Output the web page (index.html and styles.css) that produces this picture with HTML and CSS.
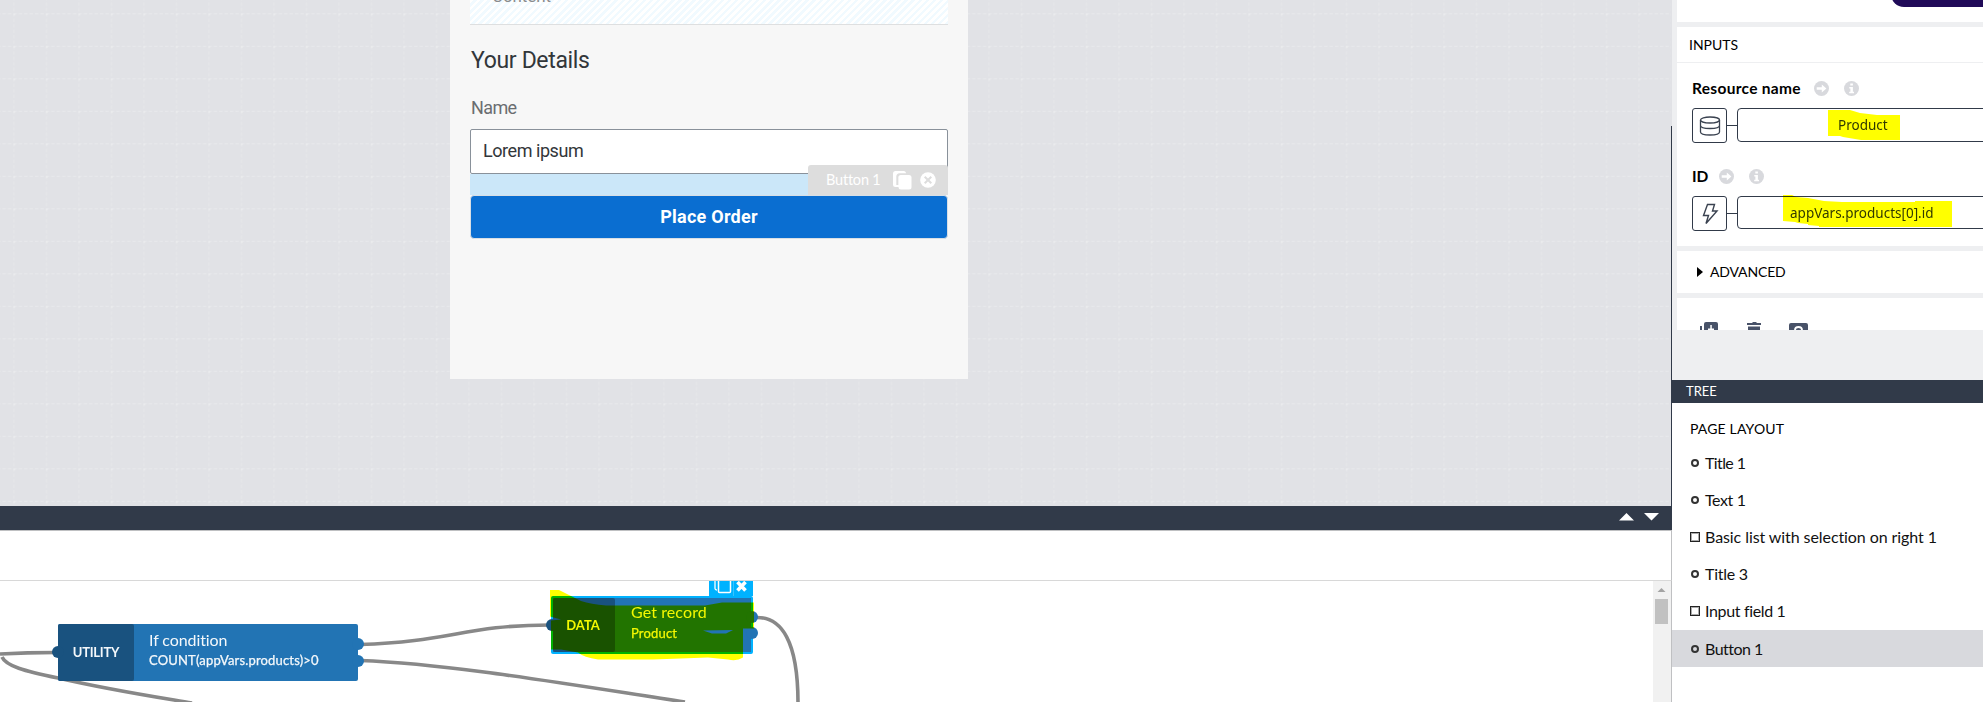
FILE: index.html
```html
<!DOCTYPE html>
<html lang="en">
<head>
<meta charset="utf-8">
<title>Composer</title>
<link rel="stylesheet" href="styles.css">
</head>
<body>
<div class="app">
  <main class="workspace">
    <section class="stage">
      <svg class="grid" width="1671" height="506">
        <defs><pattern id="grid" x="13.300" y="13.300" width="32.500" height="32.500" patternUnits="userSpaceOnUse">
          <path d="M0 .5h32.500" stroke="#e8e9ec" stroke-width="1.100" stroke-dasharray="3.400 2.017"/>
          <path d="M.5 0v32.500" stroke="#e5e6e9" stroke-width="1.100" stroke-dasharray="3.400 2.017"/>
          <path d="M0 0h2v2H0z" fill="#eaebed"/>
        </pattern></defs>
        <rect width="1671" height="506" fill="url(#grid)"/>
      </svg>
      <div class="phone">
        <div class="list-slot"><span>Content</span></div>
        <h1 class="title"><span>Your Details</span></h1>
        <label class="label"><span>Name</span></label>
        <div class="input"><span>Lorem ipsum</span></div>
        <div class="drop-gap">
          <div class="tag">
            <span class="tag-name">Button 1</span>
            <svg class="tag-copy" width="19" height="19" viewBox="0 0 19 19"><rect x="0" y="0" width="13" height="16" rx="2.5" fill="#fff"/><path d="M4.500 14V5.500q0-2 2-2H13" fill="none" stroke="#ddd" stroke-width="2.400"/><rect x="5.500" y="4" width="13" height="14.500" rx="2.500" fill="#fff"/></svg>
            <svg class="tag-close" width="16" height="16" viewBox="0 0 16 16"><circle cx="8" cy="8" r="7.800" fill="#fff"/><path d="M4.700 4.700l6.600 6.600M11.300 4.700l-6.600 6.600" stroke="#ddd" stroke-width="2"/></svg>
          </div>
        </div>
        <div class="button"><span>Place Order</span></div>
      </div>
      <div class="stage-edge"></div>
    </section>
    <div class="splitter">
      <svg width="42" height="10" viewBox="0 0 42 10"><path d="M0 8.500L7.500 1L15 8.500zM25 1h15L32.500 8.500z" fill="#fff"/></svg>
    </div>
    <div class="logic-head"></div>
    <section class="logic">
      <div class="flow">
        <svg class="wires" width="1653" height="121" viewBox="0 581 1653 121" fill="none" stroke="#888" stroke-width="3.600">
          <path d="M0 654C18 653 32 652.500 56 652.500"/>
          <path d="M2 657C6 666 24 671 58 678C110 690 150 696 192 703"/>
          <path d="M360 644.500C450 642 465 625 550 625"/>
          <path d="M360 660.500C450 664 560 683 685 702"/>
          <path d="M755 617.500C782 616 798 642 798 703"/>
        </svg>
        <div class="node node-if">
          <div class="kind"><span class="t-utility">UTILITY</span></div>
          <div class="info"><span class="t-if">If condition</span><span class="t-count">COUNT(appVars.products)&gt;0</span></div>
          <i class="port port-in"></i><i class="port port-a"></i><i class="port port-b"></i>
        </div>
        <div class="node-tools">
          <svg width="44" height="15" viewBox="0 0 44 15" fill="none" stroke="#fff"><path d="M6 0v7.500q0 1.500 2 1.500" stroke-width="1.300"/><rect x="9.500" y="-4" width="12" height="15.500" rx="1" stroke-width="1.500"/><path d="M24.500 0v15" stroke="#38c3ff"/><path d="M28.500 1l8 8.500M36.500 1l-8 8.500" stroke-width="3.600"/></svg>
        </div>
        <div class="node node-get">
          <div class="kind"><span class="t-data">DATA</span></div>
          <div class="info"><span class="t-get">Get record</span><span class="t-prod">Product</span></div>
          <i class="port port-in"></i><i class="port port-a"></i><i class="port port-b"></i>
        </div>
        <svg class="marker" width="220" height="80" viewBox="540 585 220 80"><path fill="#ff0" fill-rule="evenodd" d="M550 590h9l22 11q10 3 25 4.500H705l17-3h32v26h-11v29q-6 4-15 2l-20-2-55 2h-55q-14-2-20-7l-17-3H551v-29l10-1-11-3zM703 630.500l30-.5-7 3.500h-14z"/></svg>
      </div>
      <div class="scrollbar"><svg width="17" height="18" viewBox="0 0 17 18"><path d="M4.500 11l4-4 4 4z" fill="#a3a3a3"/></svg><div class="thumb"></div></div>
    </section>
  </main>
  <aside class="side">
    <section class="props">
      <div class="card card-top"><div class="pill"></div></div>
      <div class="card card-inputs">
        <header class="card-head"><span class="t-inputs">INPUTS</span></header>
        <div class="field">
          <div class="field-label"><span class="t-resource">Resource name</span>
            <svg width="15" height="15" viewBox="0 0 15 15"><circle cx="7.500" cy="7.500" r="7.500" fill="#d8d9dd"/><path d="M2.700 6.200h5.100V3.500l4.600 4-4.600 4V8.800H2.700z" fill="#fff"/></svg>
            <svg width="15" height="15" viewBox="0 0 15 15"><circle cx="7.500" cy="7.500" r="7.500" fill="#d8d9dd"/><path d="M6.300 2.400h2.600v2.200H6.300zM5.300 6h3.600v4.700H10v1.500H5.200v-1.500h1.200V7.400H5.300z" fill="#fff"/></svg>
          </div>
          <div class="binding"><div class="bind-icon"><svg width="22" height="20" viewBox="0 0 22 20" fill="none" stroke="#3a4250" stroke-width="1.300"><ellipse cx="11" cy="4" rx="9.500" ry="3"/><path d="M1.500 4v12c0 4 19 4 19 0V4M1.500 9.500c0 4 19 4 19 0"/></svg></div><i class="link"></i>
            <div class="value value-a"><span class="t-product">Product</span>
              <svg class="mark-a" width="72" height="30" viewBox="0 0 72 30"><path d="M0 0h22l10 3 17 2h23v25H33l-18-3-3-1H0z" fill="#ff0"/></svg></div></div>
        </div>
        <div class="field field-id">
          <div class="field-label"><span class="t-id">ID</span>
            <svg width="15" height="15" viewBox="0 0 15 15"><circle cx="7.500" cy="7.500" r="7.500" fill="#d8d9dd"/><path d="M2.700 6.200h5.100V3.500l4.600 4-4.600 4V8.800H2.700z" fill="#fff"/></svg>
            <svg width="15" height="15" viewBox="0 0 15 15"><circle cx="7.500" cy="7.500" r="7.500" fill="#d8d9dd"/><path d="M6.300 2.400h2.600v2.200H6.300zM5.300 6h3.600v4.700H10v1.500H5.200v-1.500h1.200V7.400H5.300z" fill="#fff"/></svg>
          </div>
          <div class="binding"><div class="bind-icon"><svg width="18" height="24" viewBox="0 0 18 24" fill="none" stroke="#3a4250" stroke-width="1.400"><path d="M6.500 2.500h7L11.500 9H16L5 21.500 7.500 13.500H2.500z"/></svg></div><i class="link"></i>
            <div class="value value-b"><span class="t-appvars">appVars.products[0].id</span>
              <svg class="mark-b" width="169" height="32" viewBox="0 0 169 32"><path d="M0 0h9l4 2 12 1 16 3 18 1h73V6h37v26H36v-1l-11-1v-1l-10-1-3-1-12-1z" fill="#ff0"/></svg></div></div>
        </div>
      </div>
      <div class="card card-adv"><svg width="6" height="10" viewBox="0 0 6 10"><path d="M0 0l6 5-6 5z"/></svg><span class="t-adv">ADVANCED</span></div>
      <div class="card card-actions">
        <svg width="110" height="8" viewBox="0 0 110 8" fill="#485268"><path d="M0 4h2v4H0zM4 2q0-2 2-2h10q2 0 2 2v6H4zM47 1h5l1-1h3l1 1h4v2H47zM48 4.500h12V8H48zM89 3q0-2 2-2h15q2 0 2 2v5H89z"/><path d="M10.300 3h1.500v5h-1.500zM8 6.500h6V8H8z" fill="#fff"/><path d="M95 8q0-3 3.500-3t3.500 3" fill="none" stroke="#fff" stroke-width="1.800"/></svg>
      </div>
    </section>
    <header class="tree-head"><span class="t-tree">TREE</span></header>
    <section class="tree">
      <h2 class="tree-title"><span class="t-page">PAGE LAYOUT</span></h2>
      <ul class="tree-list">
        <li><i class="dot"></i><span class="r1">Title 1</span></li>
        <li><i class="dot"></i><span class="r2">Text 1</span></li>
        <li><i class="box"></i><span class="r3">Basic list with selection on right 1</span></li>
        <li><i class="dot"></i><span class="r4">Title 3</span></li>
        <li><i class="box"></i><span class="r5">Input field 1</span></li>
        <li class="selected"><i class="dot"></i><span class="r6">Button 1</span></li>
      </ul>
    </section>
  </aside>
</div>
</body>
</html>
```
FILE: styles.css
```css
* { box-sizing: border-box; }
body { margin: 0; font-family: Lato, "Open Sans", sans-serif; color: #000; font-variant-ligatures: none; }
svg { display: block; flex: none; }
span { white-space: nowrap; }
.app { display: flex; width: 1983px; height: 702px; overflow: hidden; background: #fff; }
.workspace { width: 1672px; flex: none; display: flex; flex-direction: column; }

/* canvas */
.stage { position: relative; height: 506px; padding-left: 450px; background: #e1e2e6; }
.grid { position: absolute; left: 0; top: 0; }
.stage-edge { position: absolute; right: 0; top: 126px; width: 1px; height: 380px; background: #313a49; }
.phone { position: relative; width: 518px; height: 379px; padding: 0 20px; background: #f7f7f7; font-family: Roboto, sans-serif; }
.list-slot {
  height: 25px; border-bottom: 1px solid #dedfe0; padding-left: 22px; overflow: hidden;
  background: repeating-linear-gradient(135deg, #fff 0 2.500px, #f1faff 2.500px 5px);
  color: #8a8c8e; font-size: 17px; line-height: 20px;
}
.list-slot span { display: block; margin-top: -14px; letter-spacing: -.1px; }
.title { margin: 0; height: 70px; padding-left: 1px; font-size: 23px; font-weight: 400; line-height: 71px; letter-spacing: -.35px; color: #32363a; }
.label { display: block; height: 34px; padding-left: 1px; font-size: 18px; line-height: 26px; letter-spacing: -.6px; color: #6a6d70; }
.input { height: 45px; border: 1px solid #89919a; border-radius: 2px; background: #fff; padding-left: 12px; font-size: 18px; line-height: 42px; letter-spacing: -.45px; color: #32363a; }
.drop-gap { position: relative; height: 21px; background: #cbe7f9; }
.tag { position: absolute; right: 0; bottom: 0; width: 140px; height: 30px; display: flex; align-items: center; padding-left: 18px; background: #ddd; border-radius: 3px 3px 0 0; color: #fff; font: 14.500px Lato, sans-serif; letter-spacing: -.2px; }
.tag-name { width: 67px; margin-top: -2px; }
.tag-close { margin-left: 8px; }
.button { height: 44px; border: 1px solid #d9dfe5; border-radius: 4px; background: #0a6ed1; color: #fff; font-size: 18px; font-weight: 700; line-height: 41px; letter-spacing: .25px; text-align: center; }

/* logic panel */
.splitter { height: 24px; background: #313a49; display: flex; justify-content: flex-end; align-items: center; padding: 0 11px 2px 0; }
.logic-head { height: 51px; border: 1px solid #bfc0c2; border-width: 1px 1px 1px 0; border-bottom-color: #d8d8d8; }
.logic { height: 121px; display: flex; border-right: 1px solid #bfc0c2; }
.flow { position: relative; width: 1653px; overflow: hidden; isolation: isolate; background: #fff; }
.wires { position: absolute; left: 0; top: 0; }
.node { position: absolute; display: flex; height: 57px; background: #2274b4; color: #f4f8fb; border-radius: 2px; }
.node-if { left: 58px; top: 43px; width: 300px; }
.node-get { left: 551px; top: 15px; width: 202px; height: 58px; border: 2px solid #00b2ff; }
.kind { display: flex; align-items: center; justify-content: center; width: 76px; padding-bottom: 2px; background: #19527f; border-radius: 2px; font-size: 13px; font-weight: 700; }
.t-utility { letter-spacing: -.25px; }
.node-get .kind { width: 62px; padding: 0 2px 0 0; }
.info { display: flex; flex-direction: column; padding: 6px 0 0 15px; }
.node-get .info { padding: 4px 0 0 16px; }
.t-if, .t-get { font-size: 16px; line-height: 20px; letter-spacing: -.1px; }
.t-get { letter-spacing: .1px; }
.t-count, .t-prod { font-size: 13px; line-height: 20px; -webkit-text-stroke: .25px; letter-spacing: .17px; }
.t-prod { line-height: 22px; }
.port { position: absolute; width: 12px; height: 12px; border-radius: 50%; background: #2274b4; }
.port-in { left: -6px; top: 22px; background: #19527f; }
.port-a { right: -6px; top: 14px; }
.port-b { right: -6px; top: 31px; }
.node-get .port-in { left: -7px; top: 21px; }
.node-get .port-a { right: -7px; top: 13px; }
.node-get .port-b { right: -7px; top: 29px; }
.node-tools { position: absolute; left: 709px; top: 0; background: #00b2ff; }
.marker { position: absolute; left: 540px; top: 4px; mix-blend-mode: multiply; }
.scrollbar { width: 18px; background: #f1f1f1; }
.thumb { width: 13px; height: 25px; margin-left: 2px; background: #c1c1c1; }

/* side panel */
.side { width: 311px; flex: none; overflow: hidden; display: flex; flex-direction: column; }
.props { height: 380px; flex: none; padding-left: 5px; background: #eeeff1; display: flex; flex-direction: column; gap: 5px; }
.card { flex: none; overflow: hidden; background: #fff; }
.card-top { height: 22px; padding-left: 214px; }
.pill { width: 120px; height: 30px; margin-top: -23px; border-radius: 13px; background: #200a58; }
.card-inputs { height: 219px; }
.card-head { height: 36px; border-bottom: 1px solid #eeeff1; padding-left: 12px; font-size: 14px; line-height: 35px; }
.field { height: 87px; padding: 17px 0 0 15px; }
.field-id { padding-top: 18px; }
.field-label { height: 17px; display: flex; align-items: center; gap: 15px; font-size: 15.500px; font-weight: 700; }
.field-label span { margin: -2px -2px 0 0; }
.t-resource { letter-spacing: .3px; }
.field-label .t-id { margin-right: -4px; }
.binding { display: flex; margin-top: 11px; }
.field-id .binding { margin-top: 11px; }
.bind-icon { flex: none; width: 35px; height: 35px; border: 1px solid #313a49; border-radius: 3px; display: flex; align-items: center; justify-content: center; }
.link { flex: none; width: 10px; height: 1px; margin-top: 17px; background: #313a49; }
.value { flex: none; position: relative; isolation: isolate; width: 300px; height: 34px; border: 1px solid #313a49; border-radius: 4px; background: #fff; color: #313a49; font: 13.500px/32px "Noto Sans", sans-serif; }
.value-b { height: 33px; line-height: 32px; }
.value-a { padding-left: 100px; }
.value-b { padding-left: 52px; }
.mark-a, .mark-b { position: absolute; mix-blend-mode: multiply; }
.mark-a { left: 90px; top: 1px; }
.mark-b { left: 45px; top: -2px; }
.card-adv { height: 42px; display: flex; align-items: center; gap: 7px; padding-left: 20px; font-size: 14px; letter-spacing: -.15px; }
.t-adv { margin-top: -2px; }
.card-actions { height: 32px; padding: 24px 0 0 23px; }
.tree-head { height: 23px; flex: none; padding-left: 14px; background: #313a49; color: #fff; font-size: 13px; line-height: 22px; }
.tree-title { margin: 0; height: 41px; padding: 5px 0 0 18px; font-size: 14px; font-weight: 400; line-height: 41px; letter-spacing: .15px; }
.tree-list { list-style: none; margin: 0; padding: 0; }
.tree-list li { height: 37.200px; display: flex; align-items: center; padding-left: 18px; font-size: 16px; color: #111; }
.tree-list span { margin-top: -1px; }
.r1 { letter-spacing: -.6px; }
.r2 { letter-spacing: -.4px; }
.r3 { letter-spacing: -.08px; }
.r4 { letter-spacing: -.25px; }
.r5 { letter-spacing: -.35px; }
.r6 { letter-spacing: -.5px; }
.tree-list .selected { background: #d8d9dd; }
.dot { width: 8px; height: 8px; margin: 0 6px 0 1px; border: 2px solid #333; border-radius: 50%; }
.box { width: 10px; height: 10px; margin-right: 5px; border: 1px solid #222; box-shadow: inset 0 0 0 1px #aaa; }
```
